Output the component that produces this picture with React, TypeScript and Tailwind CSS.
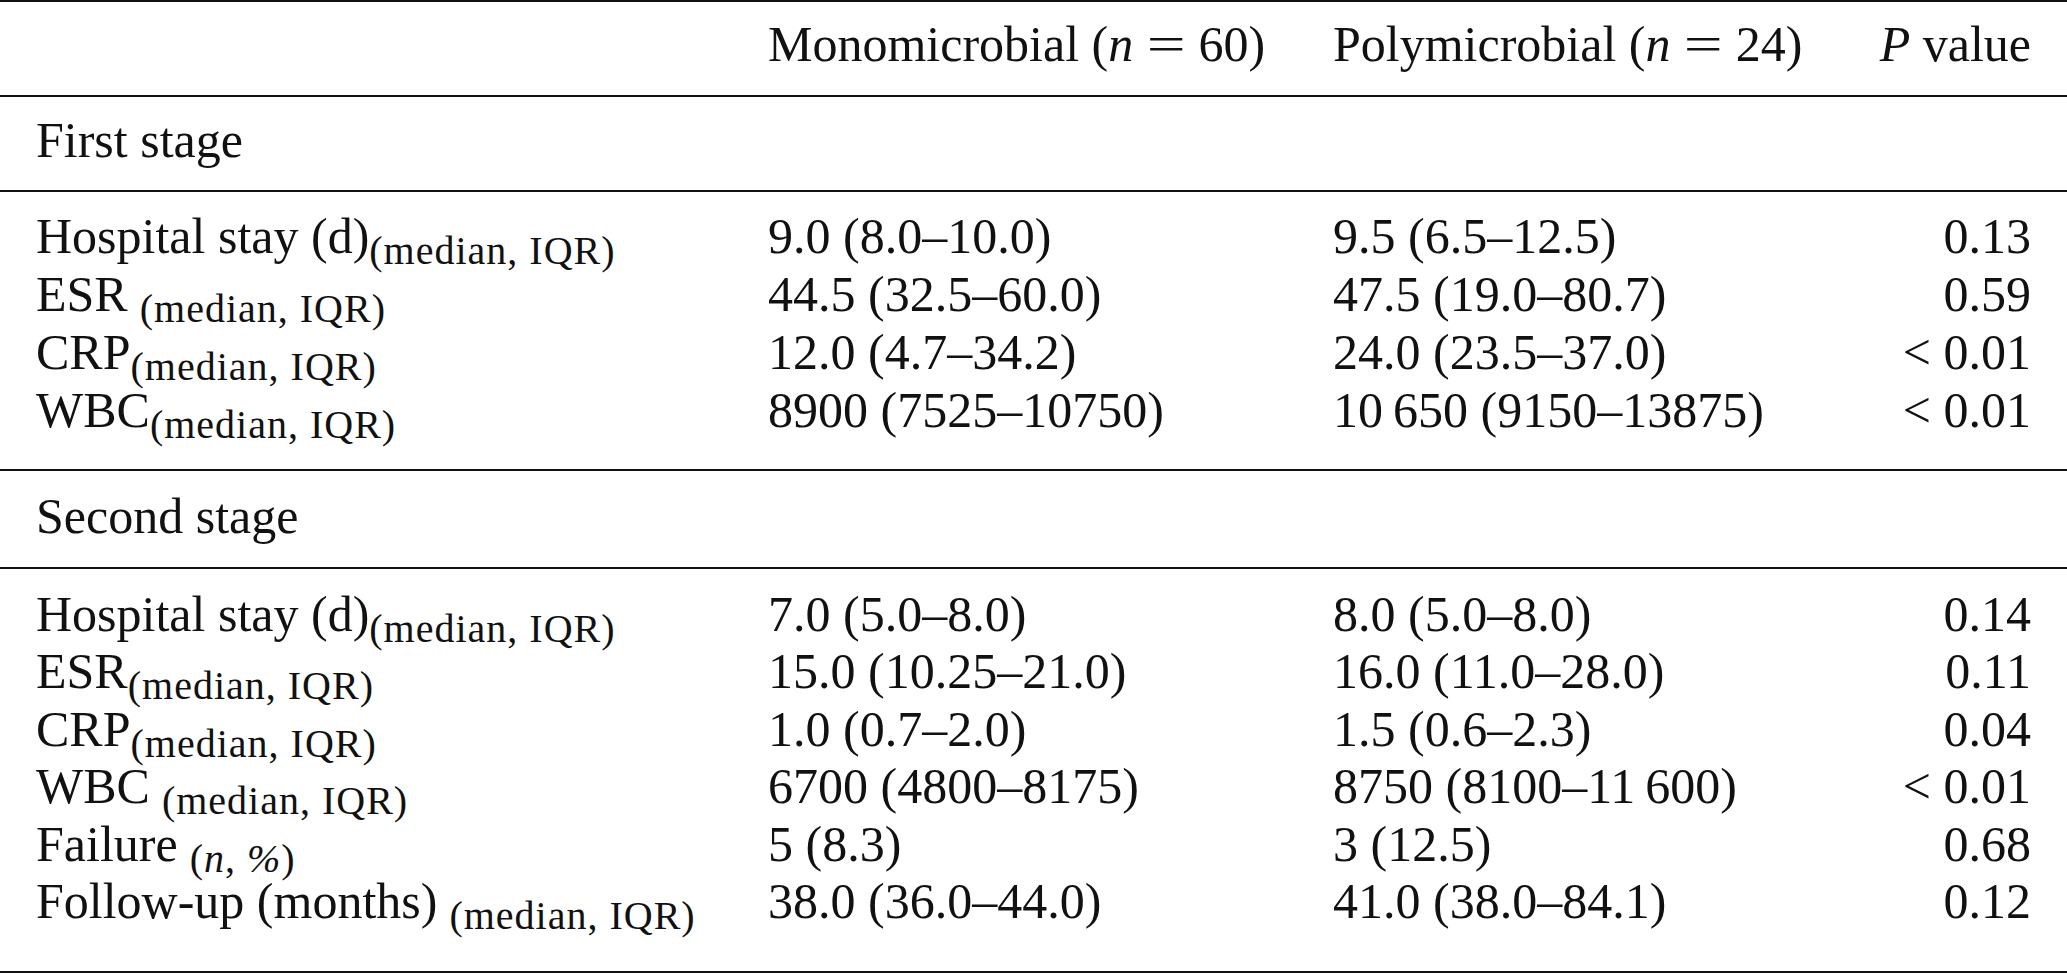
import React from "react";

type Row = {
  label: React.ReactNode;
  mono: string;
  poly: string;
  p: string;
};

const Sub = ({ children, gap = false }: { children: React.ReactNode; gap?: boolean }) => (
  <span className={`text-[40px] tracking-[1px] leading-none align-[-11px] ${gap ? "ml-[12px]" : ""}`}>
    {children}
  </span>
);

const mi = <Sub>(median, IQR)</Sub>;
const miGap = <Sub gap>(median, IQR)</Sub>;

const firstStage: Row[] = [
  { label: <>Hospital stay (d){mi}</>, mono: "9.0 (8.0–10.0)", poly: "9.5 (6.5–12.5)", p: "0.13" },
  { label: <>ESR{miGap}</>, mono: "44.5 (32.5–60.0)", poly: "47.5 (19.0–80.7)", p: "0.59" },
  { label: <>CRP{mi}</>, mono: "12.0 (4.7–34.2)", poly: "24.0 (23.5–37.0)", p: "< 0.01" },
  { label: <>WBC{mi}</>, mono: "8900 (7525–10750)", poly: "10\u2009650 (9150–13875)", p: "< 0.01" },
];

const secondStage: Row[] = [
  { label: <>Hospital stay (d){mi}</>, mono: "7.0 (5.0–8.0)", poly: "8.0 (5.0–8.0)", p: "0.14" },
  { label: <>ESR{mi}</>, mono: "15.0 (10.25–21.0)", poly: "16.0 (11.0–28.0)", p: "0.11" },
  { label: <>CRP{mi}</>, mono: "1.0 (0.7–2.0)", poly: "1.5 (0.6–2.3)", p: "0.04" },
  { label: <>WBC{miGap}</>, mono: "6700 (4800–8175)", poly: "8750 (8100–11\u2009600)", p: "< 0.01" },
  {
    label: (
      <>
        Failure
        <Sub gap>
          (<i>n</i>, <i>%</i>)
        </Sub>
      </>
    ),
    mono: "5 (8.3)",
    poly: "3 (12.5)",
    p: "0.68",
  },
  { label: <>Follow-up (months){miGap}</>, mono: "38.0 (36.0–44.0)", poly: "41.0 (38.0–84.1)", p: "0.12" },
];

const cols = "grid grid-cols-[732px_565px_1fr_auto] px-[36px]";

const Rule = () => <div className="h-[2px] bg-[#111]" />;

const Eq = () => <span className="mx-[6px] inline-block scale-x-[1.38]">=</span>;

const DataRows = ({ rows, rowH }: { rows: Row[]; rowH: string }) => (
  <>
    {rows.map((r, i) => (
      <div key={i} className={`${cols} ${rowH} whitespace-nowrap`}>
        <div>{r.label}</div>
        <div>{r.mono}</div>
        <div>{r.poly}</div>
        <div className="text-right">{r.p}</div>
      </div>
    ))}
  </>
);

export default function App() {
  return (
    <div
      className="w-[2067px] h-[975px] bg-white text-[50px] text-[#111]"
      style={{ fontFamily: '"Liberation Serif", "Times New Roman", serif' }}
    >
      <Rule />
      <div className={`${cols} h-[93px] items-center pb-[9px] whitespace-nowrap`}>
        <div />
        <div>
          Monomicrobial (<i>n</i> <Eq /> 60)
        </div>
        <div>
          Polymicrobial (<i>n</i> <Eq /> 24)
        </div>
        <div className="text-right">
          <i>P</i> value
        </div>
      </div>
      <Rule />
      <div className="flex h-[93px] items-center px-[36px] pb-[7px]">First stage</div>
      <Rule />
      <div className="h-[277px] pt-[15px]">
        <DataRows rows={firstStage} rowH="h-[58px] leading-[58px]" />
      </div>
      <Rule />
      <div className="flex h-[96px] items-center px-[36px] pb-[6px]">Second stage</div>
      <Rule />
      <div className="h-[402px] pt-[17px]">
        <DataRows rows={secondStage} rowH="h-[57.4px] leading-[57.4px]" />
      </div>
      <Rule />
    </div>
  );
}
